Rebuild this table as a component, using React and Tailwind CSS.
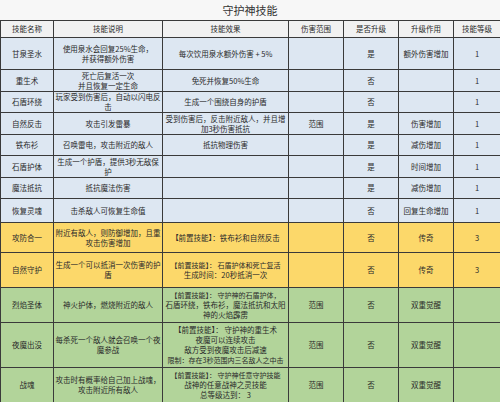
import React from "react";

const blue = "bg-[#dde7f2]";
const yellow = "bg-[#fcd86a]";
const green = "bg-[#b2d49a]";

const rows = [
  { h: "h-[32px]", bg: blue, name: "甘泉圣水", desc: ["使用泉水会回复25%生命，", "并获得额外伤害"], eff: ["每次饮用泉水额外伤害 + 5%"], range: "", up: "是", effUp: "额外伤害增加", lv: "1" },
  { h: "h-[22px]", bg: blue, name: "重生术", desc: ["死亡后复活一次", "并且恢复一定生命"], eff: ["免死并恢复50%生命"], range: "", up: "否", effUp: "", lv: "1" },
  { h: "h-[21px]", bg: blue, name: "石盾环绕", desc: ["玩家受到伤害后，自动以闪电反", "击"], eff: ["生成一个围绕自身的护盾"], range: "", up: "否", effUp: "", lv: "1" },
  { h: "h-[22px]", bg: blue, name: "自然反击", desc: ["攻击引发雷暴"], eff: ["受到伤害后，反击附近敌人，并且增", "加3秒伤害抵抗"], range: "范围", up: "是", effUp: "伤害增加", lv: "1" },
  { h: "h-[21px]", bg: blue, name: "铁布衫", desc: ["召唤雷电，攻击附近的敌人"], eff: ["抵抗物理伤害"], range: "", up: "是", effUp: "减伤增加", lv: "1" },
  { h: "h-[22px]", bg: blue, name: "石盾护体", desc: ["生成一个护盾，提供3秒无敌保", "护"], eff: [], range: "", up: "是", effUp: "时间增加", lv: "1" },
  { h: "h-[21px]", bg: blue, name: "魔法抵抗", desc: ["抵抗魔法伤害"], eff: [], range: "", up: "是", effUp: "减伤增加", lv: "1" },
  { h: "h-[24px]", bg: blue, name: "恢复灵魂", desc: ["击杀敌人可恢复生命值"], eff: [], range: "", up: "否", effUp: "回复生命增加", lv: "1" },
  { h: "h-[30px]", bg: yellow, name: "攻防合一", desc: ["附近有敌人，则防御增加，且重", "攻击伤害增加"], eff: ["【前置技能】：铁布衫和自然反击"], range: "", up: "否", effUp: "传奇", lv: "3" },
  { h: "h-[35px]", bg: yellow, name: "自然守护", desc: ["生成一个可以抵消一次伤害的护", "盾"], eff: ["【前置技能】： 石盾护体和死亡复活", "生成时间：20秒抵消一次"], range: "", up: "否", effUp: "传奇", lv: "3" },
  { h: "h-[35px]", bg: green, name: "烈焰圣体", desc: ["神火护体，燃烧附近的敌人"], eff: ["【前置技能】： 守护神的石盾护体，", "石盾环绕，铁布衫，魔法抵抗和太阳", "神的火焰霹雳"], range: "范围", up: "否", effUp: "双重觉醒", lv: "" },
  { h: "h-[45px]", bg: green, name: "夜魔出没", desc: ["每杀死一个敌人就会召唤一个夜", "魔参战"], eff: ["【前置技能】： 守护神的重生术", "夜魔可以连续攻击", "敌方受到夜魔攻击后减速", "限制：存在3秒范围内三名敌人之中击"], range: "范围", up: "否", effUp: "双重觉醒", lv: "" },
  { h: "h-[35px]", bg: green, name: "战魂", desc: ["攻击时有概率给自己加上战魂，", "攻击附近所有敌人"], eff: ["【前置技能】： 守护神任意守护技能", "战神的任意战神之灵技能", "总等级达到： 3"], range: "范围", up: "否", effUp: "双重觉醒", lv: "" },
];

const headers = ["技能名称", "技能说明", "技能效果", "伤害范围", "是否升级", "升级作用", "技能等级"];

function Lines({ items }) {
  return items.map((t, i) => (
    <div key={i} className={`whitespace-nowrap ${t.length > 16 ? "text-[7px]" : ""}`}>
      {t}
    </div>
  ));
}

export default function App() {
  const cell = "border border-[#3a3a3a] px-[1px] text-center align-middle overflow-hidden";
  return (
    <div
      className="w-[500px] h-[402px] overflow-hidden bg-[#f6f6f6] text-[#2a2a2a]"
      style={{ fontFamily: '"Noto Sans CJK SC", "Noto Sans", sans-serif' }}
    >
      <div className="h-[20px] flex items-center justify-center text-[11px] text-[#333] bg-[#f7f7f7]">
        守护神技能
      </div>
      <table className="table-fixed border-collapse w-[500px] text-[7.5px] leading-[10px]">
        <colgroup>
          <col className="w-[53px]" />
          <col className="w-[109px]" />
          <col className="w-[126px]" />
          <col className="w-[55px]" />
          <col className="w-[55px]" />
          <col className="w-[55px]" />
          <col className="w-[47px]" />
        </colgroup>
        <thead>
          <tr className="h-[17px] bg-[#f1f1f1]">
            {headers.map((h) => (
              <th key={h} className={`${cell} font-normal`}>
                {h}
              </th>
            ))}
          </tr>
        </thead>
        <tbody>
          {rows.map((r) => (
            <tr key={r.name} className={`${r.h} ${r.bg}`}>
              <td className={cell}>{r.name}</td>
              <td className={cell}>
                <Lines items={r.desc} />
              </td>
              <td className={cell}>
                <Lines items={r.eff} />
              </td>
              <td className={cell}>{r.range}</td>
              <td className={cell}>{r.up}</td>
              <td className={cell}>{r.effUp}</td>
              <td className={cell}>{r.lv}</td>
            </tr>
          ))}
        </tbody>
      </table>
    </div>
  );
}
